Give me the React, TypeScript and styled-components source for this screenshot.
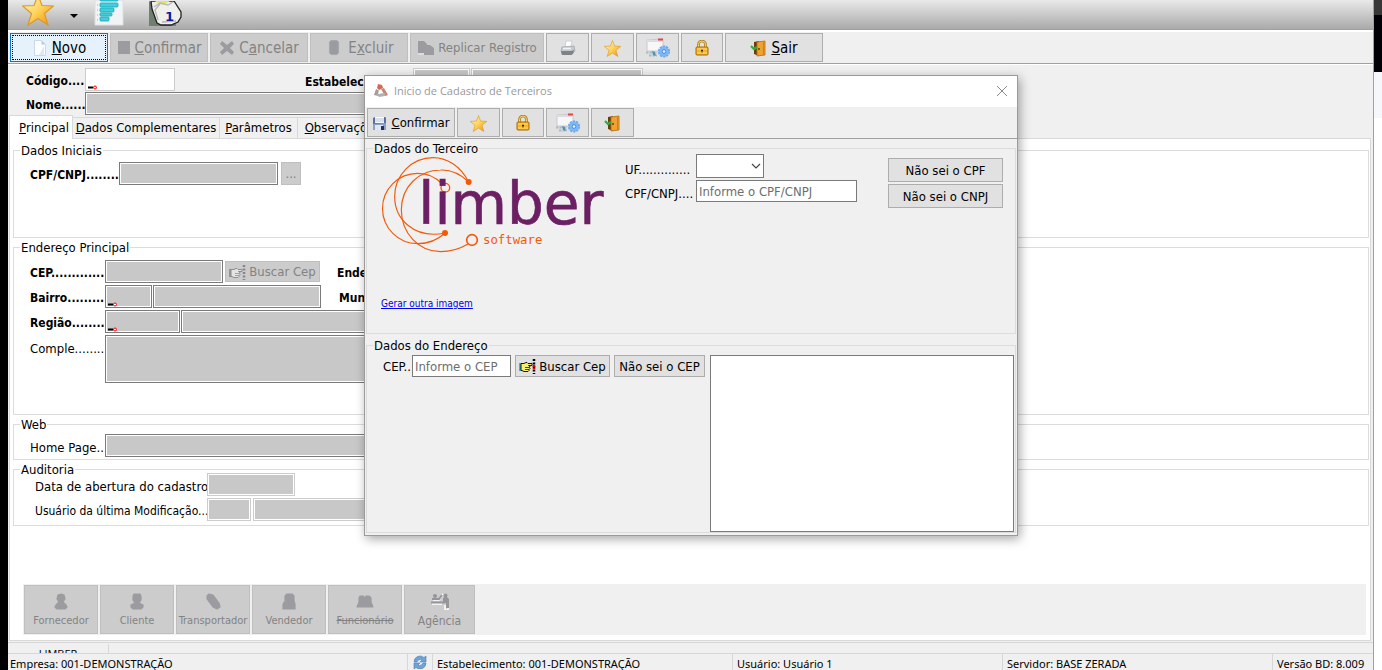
import React from 'react';
import styled, { createGlobalStyle, css } from 'styled-components';

const tahoma = `'DejaVu Sans Condensed', 'DejaVu Sans', sans-serif`;
const segoe = `'Open Sans', 'Noto Sans', sans-serif`;

const GlobalStyle = createGlobalStyle`
  *, *::before, *::after { box-sizing: border-box; }
  body { margin: 0; background: #fff; font: 13px/16px ${tahoma}; color: #000; }
  button, input, select, textarea { font: inherit; color: inherit; border-radius: 0; }
  svg { display: block; flex: none; }
`;

/* ---------- window frame ---------- */

const Desktop = styled.div`
  position: relative;
  display: grid;
  grid-template-columns: 8px minmax(0, 1fr) 8px;
  min-height: 100vh;
`;

const LeftEdge = styled.div`
  background: #000;
`;

const RightEdge = styled.div`
  background: linear-gradient(#373737 15px, #000006 15px 72px, #f5f7fa 72px 118px, #fff 118px);
`;

const Window = styled.div`
  display: flex;
  flex-direction: column;
  background: #f0f0f0;
  border-right: 1px solid #a0a0a0;
`;

const Ribbon = styled.div`
  display: flex;
  align-items: flex-end;
  height: 32px;
  padding-left: 14px;
  padding-bottom: 6px;
  background: linear-gradient(#e9e9e9, #aaa 29px, #a0a0a0 29px 30px, #fff 30px);
`;

const RibbonButton = styled.button<{ $gap: number }>`
  display: flex;
  align-items: flex-end;
  border: 0;
  padding: 0;
  background: none;
  margin-right: ${(p) => p.$gap}px;
`;

const Toolbar = styled.div`
  display: flex;
  gap: 2px;
  padding: 1px 2px;
  border-bottom: 1px solid #a0a0a0;
`;

const buttonLook = css`
  display: flex;
  align-items: center;
  justify-content: center;
  padding: 0;
  border: 1px solid #adadad;
  background: #e1e1e1;
  white-space: nowrap;
  &:disabled {
    border-color: #bfbfbf;
    background: #ccc;
    color: #838383;
  }
`;

const ToolButton = styled.button<{ $w: number; $large?: boolean; $default?: boolean }>`
  ${buttonLook}
  gap: 4px;
  width: ${(p) => p.$w}px;
  height: 29px;
  padding-top: 1px;
  font-size: ${(p) => (p.$large ? 15 : 13)}px;
  ${(p) =>
    p.$default &&
    css`
      border-color: #0078d7;
      background: #e5f1fb;
      outline: 1px dotted #000;
      outline-offset: -3px;
    `}
`;

const PushButton = styled.button<{ $w: number; $h: number; $gap?: number }>`
  ${buttonLook}
  gap: 3px;
  width: ${(p) => p.$w}px;
  height: ${(p) => p.$h}px;
  margin-left: ${(p) => p.$gap ?? 0}px;
  padding-top: 1px;
`;

/* ---------- form parts ---------- */

const Header = styled.div`
  display: flex;
  flex-direction: column;
  gap: 1px;
  padding: 3px 0 0 18px;
  border-top: 1px solid #fff;
`;

const Row = styled.div<{ $align?: string }>`
  display: flex;
  align-items: ${(p) => p.$align ?? 'center'};
`;

const Label = styled.label<{ $w: number; $bold?: boolean; $indent?: number; $top?: number }>`
  flex: none;
  width: ${(p) => p.$w}px;
  margin-left: ${(p) => p.$indent ?? 0}px;
  padding-top: ${(p) => p.$top ?? 2}px;
  overflow: hidden;
  white-space: nowrap;
  font-weight: ${(p) => (p.$bold ? 700 : 400)};
  font-size: ${(p) => (p.$bold ? 12 : 13)}px;
`;

const FineLabel = styled(Label)`
  font-size: 12px;
`;

const Box = styled.input<{ $w: number; $soft?: boolean; $gap?: number }>`
  width: ${(p) => p.$w}px;
  height: 23px;
  margin-left: ${(p) => p.$gap ?? 0}px;
  padding: 0 3px;
  border: 1px solid ${(p) => (p.$soft ? '#ccc' : '#7a7a7a')};
  background: #fff;
  &:disabled {
    background: #c8c8c8;
    box-shadow: inset 0 0 0 1px #fff;
  }
`;

const Entry = styled.input<{ $w: number }>`
  width: ${(p) => p.$w}px;
  height: 22px;
  padding: 0 2px;
  border: 1px solid #7a7a7a;
  background: #fff;
  &::placeholder {
    color: #6d6d6d;
    opacity: 1;
  }
`;

const Memo = styled.textarea<{ $w: number; $h: number; $off?: boolean }>`
  display: block;
  width: ${(p) => p.$w}px;
  height: ${(p) => p.$h}px;
  border: 1px solid #7a7a7a;
  background: ${(p) => (p.$off ? '#c8c8c8' : '#fff')};
  box-shadow: inset 0 0 0 1px #fff;
  resize: none;
`;

const StateSelect = styled.select`
  width: 68px;
  height: 24px;
  appearance: none;
  border: 1px solid #7a7a7a;
  background: #fff;
`;

const Overlay = styled.span`
  position: relative;
  display: flex;
`;

const MarkSlot = styled.span`
  position: absolute;
  left: 2px;
  bottom: 1px;
  pointer-events: none;
`;

const ArrowSlot = styled.span`
  position: absolute;
  right: 3px;
  top: 9px;
  pointer-events: none;
`;

const Tabs = styled.div`
  display: flex;
  align-items: flex-end;
  margin-left: 1px;
`;

const Tab = styled.button<{ $w: number; $active?: boolean }>`
  width: ${(p) => p.$w}px;
  height: ${(p) => (p.$active ? 24 : 21)}px;
  margin-bottom: ${(p) => (p.$active ? -1 : 0)}px;
  padding: 0 0 0 ${(p) => (p.$active ? 6 : 0)}px;
  border: 1px solid #d9d9d9;
  border-bottom: 0;
  border-left-width: ${(p) => (p.$active ? 1 : 0)}px;
  background: ${(p) => (p.$active ? '#fff' : '#f0f0f0')};
  z-index: ${(p) => (p.$active ? 1 : 0)};
  white-space: nowrap;
`;

const Page = styled.div`
  display: flex;
  flex: 1;
  flex-direction: column;
  gap: 1px;
  margin: 0 2px 1px 1px;
  padding: 3px 1px 5px 3px;
  border: 1px solid #d9d9d9;
  background: #fff;
`;

const Group = styled.fieldset<{ $h: number; $lift?: number; $indent?: number }>`
  min-width: 0;
  min-height: ${(p) => p.$h}px;
  margin: 0;
  padding: 0;
  border: 1px solid #dcdcdc;
  > legend {
    margin-left: 6px;
    padding: 0 1px;
    line-height: 17px;
  }
  > div {
    display: flex;
    flex-direction: column;
    gap: 2px;
    margin-top: ${(p) => p.$lift ?? 0}px;
    padding-left: ${(p) => p.$indent ?? 16}px;
  }
`;

const RoleStrip = styled.div`
  display: flex;
  gap: 2px;
  margin: auto 3px 0 10px;
  padding: 1px;
  background: #f0f0f0;
`;

const RoleButton = styled.button<{ $w: number; $struck?: boolean; $big?: boolean }>`
  ${buttonLook}
  flex-direction: column;
  gap: 3px;
  width: ${(p) => p.$w}px;
  height: 49px;
  padding-top: 3px;
  font-size: ${(p) => (p.$big ? 12 : 11)}px;
  text-decoration: ${(p) => (p.$struck ? 'line-through' : 'none')};
`;

const UserStrip = styled.div`
  height: 11px;
  overflow: hidden;
  border-top: 1px solid #d7d7d7;
  font: 11px/20px ${segoe};
  > span {
    display: block;
    width: 101px;
    height: 20px;
    margin-top: 1px;
    border-right: 1px solid #d7d7d7;
    text-align: center;
  }
`;

const StatusBar = styled.footer`
  display: flex;
  height: 17px;
  overflow: hidden;
  border-top: 1px solid #d7d7d7;
  font: 11px/19px 'Noto Sans', sans-serif;
`;

const StatusCell = styled.div<{ $w?: number }>`
  flex: ${(p) => (p.$w ? `0 0 ${p.$w}px` : '1 1 0')};
  padding-left: 4px;
  border-left: 1px solid #d7d7d7;
  white-space: nowrap;
  overflow: hidden;
  &:first-child {
    padding-left: 2px;
    border-left: 0;
  }
`;

/* ---------- dialog ---------- */

const Dialog = styled.section`
  position: absolute;
  z-index: 2;
  top: 75px;
  left: 0;
  right: 0;
  width: 654px;
  margin: 0 auto;
  border: 1px solid #9a9a9a;
  background: #f0f0f0;
  box-shadow: 2px 3px 10px rgba(0, 0, 0, 0.35);
`;

const TitleBar = styled.header`
  display: flex;
  align-items: center;
  gap: 5px;
  height: 31px;
  padding: 0 9px 2px 8px;
  background: #fff;
  color: #999;
  font: 11px/16px ${segoe};
`;

const CloseButton = styled.button`
  margin-left: auto;
  padding: 0;
  border: 0;
  background: none;
`;

const DialogBody = styled.div`
  display: flex;
  flex-direction: column;
  gap: 3px;
  padding: 1px 1px 2px;
`;

const ThirdParty = styled.div`
  && {
    display: grid;
    grid-template-columns: 244px 263px 115px;
    align-items: start;
    gap: 0;
  }
`;

const Brand = styled.div`
  display: flex;
  flex-direction: column;
  align-items: flex-start;
  gap: 44px;
  padding-top: 2px;
`;

const Stack = styled.div<{ $top?: number }>`
  display: flex;
  flex-direction: column;
  gap: 2px;
  padding-top: ${(p) => p.$top ?? 0}px;
`;

const ImageLink = styled.a`
  color: #0000f0;
  font-size: 10px;
  line-height: 14px;
`;

const AddressLine = styled.div`
  && {
    flex-direction: row;
    align-items: flex-start;
    gap: 4px;
    padding-top: 1px;
    padding-right: 1px;
  }
  > textarea {
    margin-left: auto;
  }
`;

/* ---------- icons ---------- */

const Star = ({ size = 17 }: { size?: number }) => (
  <svg width={size} height={size} viewBox="0 0 32 32">
    <defs>
      <linearGradient id="gold" x1="0" y1="0" x2="1" y2="1">
        <stop offset="0" stopColor="#fff6c8" />
        <stop offset="0.5" stopColor="#ffd45e" />
        <stop offset="1" stopColor="#f08c00" />
      </linearGradient>
    </defs>
    <path d="M16 1l4 10.500 11.500.5-9 7.500 3.500 11.500-10-6.500-10 6.500L9.500 19.500.5 12 12 11.500z" fill="url(#gold)" stroke="#d99a2b" strokeWidth="1.200" />
  </svg>
);

const Lock = () => (
  <svg width="14" height="16" viewBox="0 0 14 16">
    <path d="M3.500 8V4.500a3.500 3.500 0 017 0V8" fill="none" stroke="#b07d10" strokeWidth="2.600" />
    <path d="M3.500 8V4.500a3.500 3.500 0 017 0V8" fill="none" stroke="#ffe08a" strokeWidth="0.900" />
    <rect x="1" y="7" width="12" height="8" rx="1" fill="#f6b52c" stroke="#a36a00" />
    <path d="M2 9h10M2 13h10" stroke="#ffdc7a" />
    <path d="M7 9.500v3M6 10.500h2" stroke="#3b2600" />
  </svg>
);

const Door = () => (
  <svg width="17" height="17" viewBox="0 0 17 17">
    <path d="M4 2l5-1v15l-5-2z" fill="#6b3d0c" />
    <path d="M7 2l8-1v14l-8 1z" fill="#eda233" stroke="#b56d10" strokeWidth="0.800" />
    <path d="M13.500 2v13" stroke="#c98224" />
    <circle cx="9" cy="9" r="0.900" fill="#5b3300" />
    <path d="M1 6l3 3 3-2" fill="none" stroke="#2fae3c" strokeWidth="2.200" />
  </svg>
);

const GearWindow = () => (
  <svg width="26" height="20" viewBox="0 0 26 20">
    <path d="M2 2l16-1v12H2z" fill="#f7f7f8" stroke="#c9c9cf" />
    <path d="M2 3h16" stroke="#dcdce2" strokeWidth="2" />
    <path d="M13 1.500h5" stroke="#e2474c" strokeWidth="2" />
    <path d="M1 14.500h11M4 17.500h8" stroke="#a9bcc6" strokeWidth="2" strokeDasharray="2.500 1" />
    <path d="M7 13l3 1 1 4-3-1z" fill="#4f94a8" />
    <circle cx="19" cy="13.500" r="5" fill="#7db7f5" />
    <circle cx="19" cy="13.500" r="5.300" fill="none" stroke="#6aa8f0" strokeWidth="1.600" strokeDasharray="2.400 0.900" />
    <circle cx="19" cy="13.500" r="1.800" fill="#e6f3ff" stroke="#4b8bdc" />
  </svg>
);

const Printer = () => (
  <svg width="16" height="16" viewBox="0 0 16 16">
    <path d="M5 7l1-6h6l-1 6z" fill="#fdfdfd" stroke="#c4c8cc" strokeWidth="0.800" />
    <path d="M2 7l12-1 1 5-3 3H2L1 11z" fill="#c6cacd" stroke="#a4a8ac" strokeWidth="0.800" />
    <path d="M1 11h10l3-1-1 4-2 1H2z" fill="#7d8387" />
    <path d="M3 8.500h8" stroke="#f2f4f5" strokeWidth="1.500" />
  </svg>
);

const Sheet = () => (
  <svg width="16" height="16" viewBox="0 0 16 16">
    <path d="M2.500.5h7l4 4v11h-11z" fill="#fbfdff" stroke="#c9d8ec" />
    <path d="M9.500.5v4h4z" fill="#b4cbe8" />
    <path d="M12 6v9H7z" fill="#dce8f6" />
  </svg>
);

const Block = () => (
  <svg width="14" height="14" viewBox="0 0 14 14">
    <path d="M1 0h12v13H1z" fill="#9c9ca0" />
  </svg>
);

const Cross = () => (
  <svg width="16" height="16" viewBox="0 0 16 16">
    <path d="M3 1l5 4 5-4 2 3-4 4 4 4-2 3-5-4-5 4-2-3 4-4-4-4z" fill="#9c9ca0" />
  </svg>
);

const Can = () => (
  <svg width="20" height="16" viewBox="0 0 20 16">
    <path d="M5 2l2-2h6l2 2v11l-2 2H7l-2-2z" fill="#9c9ca0" stroke="#b6cbd6" strokeWidth="0.600" />
  </svg>
);

const Copies = () => (
  <svg width="17" height="16" viewBox="0 0 17 16">
    <path d="M1 1h6l3 3v9H1z" fill="#9c9ca0" />
    <path d="M7 5h6l4 3v7H7z" fill="#9c9ca0" />
    <path d="M1 14h6" stroke="#eee" />
  </svg>
);

const Floppy = () => (
  <svg width="15" height="15" viewBox="0 0 15 15">
    <path d="M1 2l2-1h10l1 1v12H1z" fill="#5a6ea3" />
    <path d="M3 1h9v6H3z" fill="#f4f7fb" />
    <path d="M3 3h9M3 5h9" stroke="#a9b6cf" strokeWidth="0.700" />
    <path d="M1 8l13-1v7H1z" fill="#8fa0c7" />
    <path d="M3 9h8v5H3z" fill="#dfe5f1" />
    <path d="M9 10h3v4H9z" fill="#222f63" />
  </svg>
);

const Hand = ({ off }: { off?: boolean }) => {
  const line = off ? '#85858a' : '#000';
  return (
    <svg width="17" height="15" viewBox="0 0 17 15">
      <path d="M1 4v8" stroke={off ? line : '#12a5a5'} strokeWidth="1.500" />
      <path d="M2 4.500h3l2-1h1l1 1h4v2H9.500l1.500.5-.5 1.500.5 1-1 1v1l-1 1H5l-2-1H2z" fill={off ? '#e4e4e4' : '#f8f06a'} stroke={line} strokeWidth="0.900" />
      <path d="M6 8.500h4M6 10.500h4" stroke={line} strokeWidth="0.700" />
      <path d="M15 0v15" stroke={line} strokeWidth="2.500" strokeDasharray="2 1.500" />
      {!off && <path d="M15 6v4" stroke="#e00000" strokeWidth="2.500" strokeDasharray="2 1" />}
    </svg>
  );
};

const people: Record<string, string> = {
  supplier: 'M10 1l3 1 1 4-2 3 3 3 1 2-2 2H6l-2-2 1-2 3-3-2-3 1-4z',
  client: 'M7 1h6l1 2v4l-2 3 4 2v2l-2 2H6l-2-2v-2l4-2-2-3V3z',
  carrier: 'M6 1l4 1 3 4 3 4 1 4-3 2-4-2-3-4-3-4 0-3z',
  seller: 'M8 1h5l2 2v5l1 3v5H4v-5l2-3V3z',
  staff: 'M5 3h3l2 2 1-2h3l2 2v4l2 5H2l2-5V5z',
};

const Person = ({ kind }: { kind: string }) => (
  <svg width="20" height="17" viewBox="0 0 20 17">
    <path d={people[kind]} fill="#9c9ca0" stroke="#9c9ca0" strokeWidth="1.200" strokeLinejoin="round" />
  </svg>
);

const Agency = () => (
  <svg width="20" height="17" viewBox="0 0 20 17">
    <path d="M3 7h6l4-6M2 11h10M18 8v9h-3v-5" stroke="#fff" strokeWidth="1.500" fill="none" />
    <path d="M1 9.500h14M2 6h7l3-4" stroke="#95959a" strokeWidth="2" fill="none" />
    <path d="M13 5l3-2 3 3v9h-3v-5h-3z" fill="#95959a" />
    <circle cx="15.500" cy="2.500" r="2" fill="#95959a" />
    <circle cx="5" cy="3" r="2" fill="#95959a" />
  </svg>
);

const KeyMark = () => (
  <svg width="11" height="5" viewBox="0 0 11 5">
    <path d="M1 2.500h5" stroke="#000" strokeWidth="2" />
    <circle cx="8" cy="2.500" r="1.500" fill="#fff" stroke="#f00" />
  </svg>
);

const Refresh = () => (
  <svg width="16" height="15" viewBox="0 0 16 15">
    <path d="M2 8a6 6 0 0110-4.500L14 2v6H8l2-2a3.500 3.500 0 00-5 2zM14 9a6 6 0 01-10 4.500L2 15V9h6l-2 2a3.500 3.500 0 005-2z" fill="#6ea3d8" stroke="#4b7fb8" strokeWidth="0.600" />
  </svg>
);

const ListChart = () => (
  <svg width="30" height="26" viewBox="0 0 30 26">
    <path d="M1 0h28v25H1z" fill="#f2f3f5" stroke="#dcdee2" />
    <g fill="#3fd0dc" stroke="#1aa5b8" strokeWidth="0.800">
      <rect x="6" y="-3" width="18" height="4" rx="1" />
      <rect x="6" y="3" width="18" height="4" rx="1" />
      <rect x="6" y="8" width="14" height="4" rx="1" />
      <rect x="6" y="13" width="12" height="3" rx="1" />
      <rect x="6" y="17" width="9" height="4" rx="1" />
    </g>
    <path d="M3 5h1M3 10h1M3 15h1M3 20h1" stroke="#e09a9a" />
  </svg>
);

const Calendar = () => (
  <svg width="33" height="25" viewBox="0 0 33 25">
    <path d="M0 0v25h27V14z" fill="#6f806f" />
    <path d="M2 0l1 8 5 14 4 2h10l7-3 3-5v-5L25 0z" fill="#efefec" stroke="#222" strokeWidth="1.300" />
    <path d="M6 0h15l-5 3-8-1z" fill="#dfe66a" />
    <path d="M5 6l6-4 8 2 5-3M9 19l-3-10 5-6M13 21l14-1" stroke="#b8b8b8" strokeWidth="1.300" fill="none" />
    <text x="16" y="20" fontFamily="'DejaVu Sans', sans-serif" fontWeight="700" fontSize="13" fill="#0b1e9a">1</text>
  </svg>
);

const Blocks = () => (
  <svg width="16" height="15" viewBox="0 0 16 15">
    <path d="M5 1l4 1 1 3-4 2-2-2z" fill="#cf6b55" />
    <path d="M3 6l4 2-2 5-4-1z" fill="#a89a98" />
    <path d="M8 6l3-1 4 7-3 1z" fill="#c98474" />
    <path d="M3 11l9-1v3l-6 1z" fill="#a9b4b8" />
    <path d="M6 7l2 3-3 1z" fill="#fff" />
  </svg>
);

const CloseGlyph = () => (
  <svg width="12" height="12" viewBox="0 0 12 12">
    <path d="M1 1l10 10M11 1L1 11" stroke="#8c8c8c" strokeWidth="1" />
  </svg>
);

const Logo = () => (
  <svg width="225" height="97" viewBox="66 258 675 291" role="img" aria-label="limber software">
    <g fill="none" stroke="#f25a0a" strokeWidth="3.500">
      <path d="M329 336C303 286 262 263 222 263C158 263 107 316 107 380C107 446 165 508 258 489" />
      <path d="M249 342C228 318 204 310 176 310A105 105 0 1 0 176 521C215 521 238 508 258 489" />
      <path d="M329 336C305 312 275 299 245 300C180 300 127 350 127 420C127 490 180 545 245 545C280 545 305 535 327 522" />
      <circle cx="259" cy="353" r="13" fill="#f0f0f0" strokeWidth="4" />
      <circle cx="339" cy="510" r="16" fill="#f0f0f0" strokeWidth="5" />
    </g>
    <circle cx="329" cy="336" r="9" fill="#f25a0a" />
    <circle cx="258" cy="489" r="9" fill="#f25a0a" />
    <text x="178" y="461" fontFamily="'DejaVu Sans', sans-serif" fontSize="174" fill="#6b2064" stroke="#6b2064" strokeWidth="2">limber</text>
    <text x="372" y="521" fontFamily="'DejaVu Sans Mono', monospace" fontSize="37" fill="#f25a0a">software</text>
  </svg>
);

/* ---------- page ---------- */

const roles = [
  { name: 'Fornecedor', icon: 'supplier' },
  { name: 'Cliente', icon: 'client' },
  { name: 'Transportador', icon: 'carrier' },
  { name: 'Vendedor', icon: 'seller' },
  { name: 'Funcionário', icon: 'staff', struck: true },
];

function MarkedBox(props: { id: string; w: number; off?: boolean }) {
  return (
    <Overlay>
      <Box id={props.id} $w={props.w} $soft={!props.off} disabled={props.off} />
      <MarkSlot><KeyMark /></MarkSlot>
    </Overlay>
  );
}

function StartDialog() {
  return (
    <Dialog role="dialog" aria-labelledby="dialog-title">
      <TitleBar>
        <Blocks />
        <span id="dialog-title">Inicio de Cadastro de Terceiros</span>
        <CloseButton aria-label="Fechar"><CloseGlyph /></CloseButton>
      </TitleBar>
      <Toolbar>
        <ToolButton $w={88}><Floppy /><span><u>C</u>onfirmar</span></ToolButton>
        <ToolButton $w={43} aria-label="Favorito"><Star /></ToolButton>
        <ToolButton $w={42} aria-label="Bloquear"><Lock /></ToolButton>
        <ToolButton $w={43} aria-label="Configurar"><GearWindow /></ToolButton>
        <ToolButton $w={43} aria-label="Sair"><Door /></ToolButton>
      </Toolbar>
      <DialogBody>
        <Group $h={194} $lift={-3} $indent={14}>
          <legend>Dados do Terceiro</legend>
          <ThirdParty>
            <Brand>
              <Logo />
              <ImageLink href="#imagem">Gerar outra imagem</ImageLink>
            </Brand>
            <Stack>
              <Row $align="flex-end">
                <Label $w={71} htmlFor="uf">UF..............</Label>
                <Overlay>
                  <StateSelect id="uf"><option></option></StateSelect>
                  <ArrowSlot>
                    <svg width="10" height="7" viewBox="0 0 10 7"><path d="M1 1l4 4 4-4" fill="none" stroke="#444" strokeWidth="1.200" /></svg>
                  </ArrowSlot>
                </Overlay>
              </Row>
              <Row $align="flex-end">
                <Label $w={71} htmlFor="doc">CPF/CNPJ....</Label>
                <Entry id="doc" $w={161} placeholder="Informe o CPF/CNPJ" />
              </Row>
            </Stack>
            <Stack $top={4}>
              <PushButton $w={115} $h={24}>Não sei o CPF</PushButton>
              <PushButton $w={115} $h={24}>Não sei o CNPJ</PushButton>
            </Stack>
          </ThirdParty>
        </Group>
        <Group $h={196}>
          <legend>Dados do Endereço</legend>
          <AddressLine>
            <Row>
              <Label $w={29} htmlFor="cep-busca">CEP..</Label>
              <Entry id="cep-busca" $w={99} placeholder="Informe o CEP" />
            </Row>
            <PushButton $w={95} $h={22}><Hand />Buscar Cep</PushButton>
            <PushButton $w={91} $h={22}>Não sei o CEP</PushButton>
            <Memo $w={304} $h={177} aria-label="Resultado" />
          </AddressLine>
        </Group>
      </DialogBody>
    </Dialog>
  );
}

export default function App() {
  return (
    <Desktop>
      <GlobalStyle />
      <LeftEdge />
      <Window>
        <Ribbon>
          <RibbonButton $gap={16} aria-label="Favoritos"><Star size={32} /></RibbonButton>
          <RibbonButton $gap={16} aria-label="Mais favoritos">
            <svg width="8" height="13" viewBox="0 0 8 13"><path d="M0 1h8L4 5z" /></svg>
          </RibbonButton>
          <RibbonButton $gap={25} aria-label="Relatórios"><ListChart /></RibbonButton>
          <RibbonButton $gap={0} aria-label="Agenda"><Calendar /></RibbonButton>
        </Ribbon>
        <Toolbar>
          <ToolButton $w={98} $large $default><Sheet /><span><u>N</u>ovo</span></ToolButton>
          <ToolButton $w={98} $large disabled><Block /><span><u>C</u>onfirmar</span></ToolButton>
          <ToolButton $w={98} $large disabled><Cross /><span>C<u>a</u>ncelar</span></ToolButton>
          <ToolButton $w={98} $large disabled><Can /><span>E<u>x</u>cluir</span></ToolButton>
          <ToolButton $w={134} disabled><Copies />Replicar Registro</ToolButton>
          <ToolButton $w={43} aria-label="Imprimir"><Printer /></ToolButton>
          <ToolButton $w={43} aria-label="Favorito"><Star /></ToolButton>
          <ToolButton $w={43} aria-label="Configurar"><GearWindow /></ToolButton>
          <ToolButton $w={42} aria-label="Bloquear"><Lock /></ToolButton>
          <ToolButton $w={98} $large><Door /><span><u>S</u>air</span></ToolButton>
        </Toolbar>
        <Header>
          <Row>
            <Label $w={59} $bold htmlFor="codigo">Código....</Label>
            <MarkedBox id="codigo" w={90} />
            <Label $w={108} $indent={130} $top={4} $bold htmlFor="estab">Estabelecimento</Label>
            <Box id="estab" $w={57} $soft disabled />
            <Box $w={172} $gap={1} $soft disabled aria-label="Nome do estabelecimento" />
          </Row>
          <Row>
            <Label $w={59} $bold htmlFor="nome">Nome......</Label>
            <Box id="nome" $w={560} disabled />
          </Row>
        </Header>
        <Tabs role="tablist">
          <Tab role="tab" $w={64} $active><u>P</u>rincipal</Tab>
          <Tab role="tab" $w={147}><u>D</u>ados Complementares</Tab>
          <Tab role="tab" $w={78}><u>P</u>arâmetros</Tab>
          <Tab role="tab" $w={90}><u>O</u>bservações</Tab>
        </Tabs>
        <Page>
          <Group $h={96} $lift={3}>
            <legend>Dados Iniciais</legend>
            <div>
              <Row>
                <Label $w={89} $bold htmlFor="cpf">CPF/CNPJ........</Label>
                <Box id="cpf" $w={159} disabled />
                <PushButton $w={20} $h={23} $gap={3} disabled>...</PushButton>
              </Row>
            </div>
          </Group>
          <Group $h={176} $lift={4}>
            <legend>Endereço Principal</legend>
            <div>
              <Row>
                <Label $w={75} $bold htmlFor="cep">CEP.............</Label>
                <Box id="cep" $w={118} disabled />
                <PushButton $w={95} $h={21} $gap={2} disabled><Hand off />Buscar Cep</PushButton>
                <Label $w={75} $indent={17} $bold htmlFor="endereco">Endereço</Label>
                <Box id="endereco" $w={300} disabled />
              </Row>
              <Row>
                <Label $w={75} $bold htmlFor="bairro">Bairro..........</Label>
                <MarkedBox id="bairro" w={47} off />
                <Box $w={168} $gap={1} disabled aria-label="Nome do bairro" />
                <Label $w={75} $indent={18} $bold htmlFor="municipio">Município</Label>
                <Box id="municipio" $w={300} disabled />
              </Row>
              <Row>
                <Label $w={75} $bold htmlFor="regiao">Região........</Label>
                <MarkedBox id="regiao" w={75} off />
                <Box $w={300} $gap={1} disabled aria-label="Nome da região" />
              </Row>
              <Row $align="flex-start">
                <Label $w={75} $top={6} htmlFor="comple">Comple........</Label>
                <Memo id="comple" $w={500} $h={48} $off disabled />
              </Row>
            </div>
          </Group>
          <Group $h={44} $lift={1}>
            <legend>Web</legend>
            <div>
              <Row>
                <Label $w={75} $top={4} htmlFor="home">Home Page...</Label>
                <Box id="home" $w={500} disabled />
              </Row>
            </div>
          </Group>
          <Group $h={65} $lift={-5} $indent={21}>
            <legend>Auditoria</legend>
            <div>
              <Row>
                <Label $w={172} $top={4} htmlFor="abertura">Data de abertura do cadastro</Label>
                <Box id="abertura" $w={88} $soft disabled />
              </Row>
              <Row>
                <FineLabel $w={172} htmlFor="usuario">Usuário da última Modificação...</FineLabel>
                <Box id="usuario" $w={44} $soft disabled />
                <Box $w={250} $gap={2} $soft disabled aria-label="Nome do usuário" />
              </Row>
            </div>
          </Group>
          <RoleStrip>
            {roles.map((r) => (
              <RoleButton key={r.name} $w={74} $struck={r.struck} disabled>
                <Person kind={r.icon} />
                {r.name}
              </RoleButton>
            ))}
            <RoleButton $w={71} $big disabled><Agency />Agência</RoleButton>
          </RoleStrip>
        </Page>
        <UserStrip><span>LIMBER</span></UserStrip>
        <StatusBar>
          <StatusCell $w={399}>Empresa: 001-DEMONSTRAÇÃO</StatusCell>
          <StatusCell $w={25}><Refresh /></StatusCell>
          <StatusCell $w={300}>Estabelecimento: 001-DEMONSTRAÇÃO</StatusCell>
          <StatusCell $w={270}>Usuário: Usuário 1</StatusCell>
          <StatusCell>Servidor: BASE ZERADA</StatusCell>
          <StatusCell $w={101}>Versão BD: 8.009</StatusCell>
        </StatusBar>
      </Window>
      <RightEdge />
      <StartDialog />
    </Desktop>
  );
}
